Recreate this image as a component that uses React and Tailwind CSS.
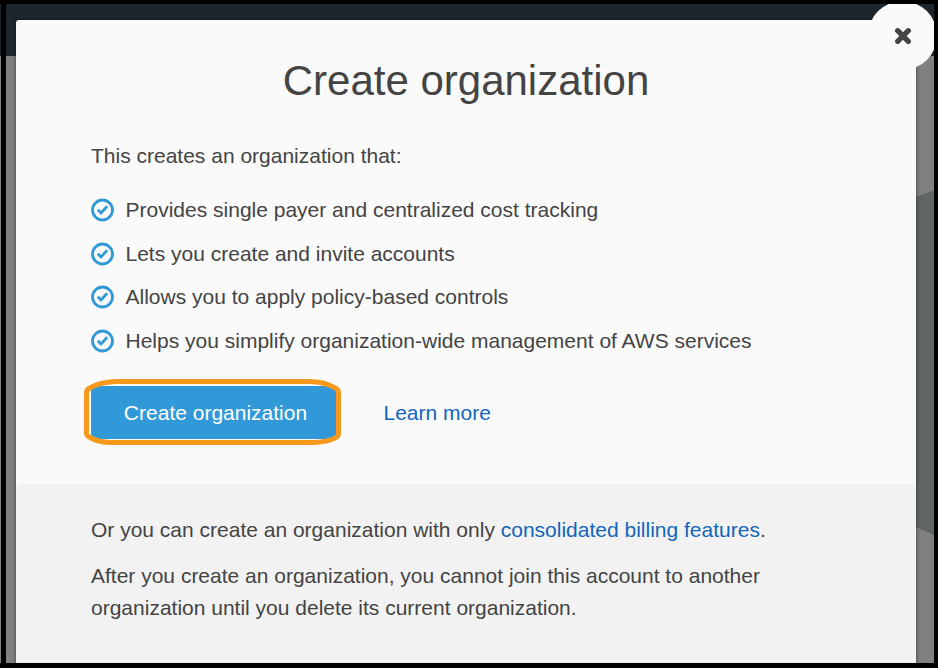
const benefits = [
  'Provides single payer and centralized cost tracking',
  'Lets you create and invite accounts',
  'Allows you to apply policy-based controls',
  'Helps you simplify organization-wide management of AWS services',
];

function CheckCircle() {
  return (
    <svg className="h-6 w-6 shrink-0" viewBox="0 0 24 24" fill="none" stroke="#3299d8">
      <circle cx="11.5" cy="12" r="10" strokeWidth="2.8" />
      <path d="M6.8 11.800 10 15 16.200 8.300" strokeWidth="2.8" />
    </svg>
  );
}

function Backdrop() {
  return (
    <div className="absolute inset-0">
      <div className="h-14 bg-[#1e262d]" />
      <svg className="absolute top-0 right-0 h-full w-[22px]" viewBox="916 0 22 668">
        <path d="M916 197 934 190.500 938 190V537L934 535 916 527Z" fill="#606564" />
      </svg>
    </div>
  );
}

function Frame() {
  return (
    <div className="absolute inset-0 border-t-4 border-r-4 border-b-[5px] border-l-0 border-black">
      <div className="absolute -top-1 -bottom-[5px] left-px w-[5px] bg-black" />
    </div>
  );
}

export default function App() {
  return (
    <div
      className="relative h-[668px] w-[938px] overflow-hidden bg-[#808080] text-[21px] text-[#444]"
      style={{ fontFamily: '"Liberation Sans", Arial, sans-serif' }}
    >
      <Backdrop />
      <main className="relative mt-5 ml-4 flex h-[660px] w-[900px] flex-col rounded-[3px] bg-[#fafafa] shadow-[0_0_4px_rgba(0,0,0,0.5)]">
        <button
          aria-label="Close"
          className="absolute -top-[19px] -right-[21px] flex h-[69px] w-[69px] items-center justify-center rounded-full bg-[#fafafa]"
        >
          <svg className="mt-px h-[18px] w-[18px]" viewBox="0 0 17 17" stroke="#444" strokeWidth="5" strokeLinecap="round">
            <path d="M3.500 3.500 13.500 13.500M13.500 3.500 3.500 13.500" />
          </svg>
        </button>
        <section className="relative h-[464px] px-[75px] pt-9">
          <h1 className="text-center text-[42px] leading-[50px]">Create organization</h1>
          <p className="mt-[38px] leading-6">This creates an organization that:</p>
          <ul className="mt-[30px] flex flex-col gap-[19.5px]">
            {benefits.map((text) => (
              <li key={text} className="flex h-6 items-center gap-[10.5px] leading-6 whitespace-nowrap">
                <CheckCircle />
                {text}
              </li>
            ))}
          </ul>
          <div className="mt-[33.5px] flex items-center gap-[44.5px]">
            <button className="relative h-[53px] w-[248px] rounded-[5px] bg-[#3299d8] pt-px pl-px text-white">
              Create organization
              <svg
                className="absolute -top-[7px] -left-[7px] h-[66px] w-[257px]"
                viewBox="0 0 257 66"
                fill="none"
              >
                <path d="M24 6H233M235 60.500H18M6.500 54V11" stroke="white" />
                <path
                  d="M32 2.500C20 3 10 6 5 9.500Q2.500 11 2.500 14V54Q2.500 57 6 58.500C12 62 20 63.500 27 63.500H230C240 63 248 61 252 58.500Q254.500 57 254.500 54V14Q254.500 11 252 9.500C245 5 235 2.500 225 2.500Z"
                  stroke="#f8981d"
                  strokeWidth="5"
                  strokeLinejoin="round"
                />
              </svg>
            </button>
            <a className="pt-px text-[#1166bb]">Learn more</a>
          </div>
        </section>
        <section className="flex-1 rounded-t-[7px] bg-[#f2f2f2] px-[75px] pt-[30px] leading-8">
          <p>
            Or you can create an organization with only{' '}
            <a className="text-[#1166bb]">consolidated billing features</a>.
          </p>
          <p className="mt-[14px]">
            After you create an organization, you cannot join this account to another
            <br />
            organization until you delete its current organization.
          </p>
        </section>
      </main>
      <Frame />
    </div>
  );
}
